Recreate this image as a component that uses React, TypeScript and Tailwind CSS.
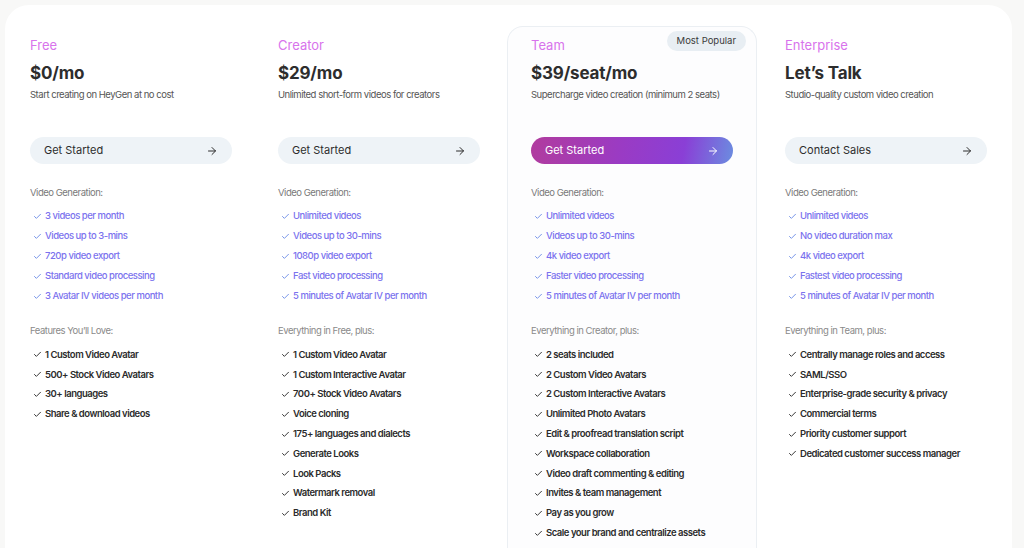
import { ArrowRight, Check } from 'lucide-react';

type Plan = {
    name: string;
    price: string;
    desc: string;
    cta: string;
    genLabel: string;
    gen: string[];
    featLabel: string;
    feats: string[];
    popular?: boolean;
    width: string;
};

const plans: Plan[] = [
    {
        name: 'Free',
        price: '$0/mo',
        desc: 'Start creating on HeyGen at no cost',
        cta: 'Get Started',
        genLabel: 'Video Generation:',
        gen: [
            '3 videos per month',
            'Videos up to 3-mins',
            '720p video export',
            'Standard video processing',
            '3 Avatar IV videos per month',
        ],
        featLabel: 'Features You’ll Love:',
        feats: ['1 Custom Video Avatar', '500+ Stock Video Avatars', '30+ languages', 'Share & download videos'],
        width: 'w-[248px]',
    },
    {
        name: 'Creator',
        price: '$29/mo',
        desc: 'Unlimited short-form videos for creators',
        cta: 'Get Started',
        genLabel: 'Video Generation:',
        gen: [
            'Unlimited videos',
            'Videos up to 30-mins',
            '1080p video export',
            'Fast video processing',
            '5 minutes of Avatar IV per month',
        ],
        featLabel: 'Everything in Free, plus:',
        feats: [
            '1 Custom Video Avatar',
            '1 Custom Interactive Avatar',
            '700+ Stock Video Avatars',
            'Voice cloning',
            '175+ languages and dialects',
            'Generate Looks',
            'Look Packs',
            'Watermark removal',
            'Brand Kit',
        ],
        width: 'w-[253px]',
    },
    {
        name: 'Team',
        price: '$39/seat/mo',
        desc: 'Supercharge video creation (minimum 2 seats)',
        cta: 'Get Started',
        genLabel: 'Video Generation:',
        gen: [
            'Unlimited videos',
            'Videos up to 30-mins',
            '4k video export',
            'Faster video processing',
            '5 minutes of Avatar IV per month',
        ],
        featLabel: 'Everything in Creator, plus:',
        feats: [
            '2 seats included',
            '2 Custom Video Avatars',
            '2 Custom Interactive Avatars',
            'Unlimited Photo Avatars',
            'Edit & proofread translation script',
            'Workspace collaboration',
            'Video draft commenting & editing',
            'Invites & team management',
            'Pay as you grow',
            'Scale your brand and centralize assets',
        ],
        popular: true,
        width: 'w-[250px]',
    },
    {
        name: 'Enterprise',
        price: 'Let’s Talk',
        desc: 'Studio-quality custom video creation',
        cta: 'Contact Sales',
        genLabel: 'Video Generation:',
        gen: [
            'Unlimited videos',
            'No video duration max',
            '4k video export',
            'Fastest video processing',
            '5 minutes of Avatar IV per month',
        ],
        featLabel: 'Everything in Team, plus:',
        feats: [
            'Centrally manage roles and access',
            'SAML/SSO',
            'Enterprise-grade security & privacy',
            'Commercial terms',
            'Priority customer support',
            'Dedicated customer success manager',
        ],
        width: 'ml-[4px] w-[250px]',
    },
];

function PlanColumn({ plan }: { plan: Plan }) {
    const card = plan.popular
        ? 'border border-b-0 border-[#ebeff3] bg-[#fdfdfe] rounded-t-[16px]'
        : 'border border-transparent';
    return (
        <div className={`relative shrink-0 px-[23px] pt-[10px] pb-10 tracking-[-0.03em] whitespace-nowrap ${plan.width} ${card}`}>
            {plan.popular && (
                <span className="absolute top-[4px] right-[10px] rounded-full bg-[#e8eef3] px-[10px] py-[4px] text-[9.5px] leading-[12px] tracking-normal text-[#3a3a3a]">
                    Most Popular
                </span>
            )}
            <div className="text-[13px] leading-[16px] tracking-normal text-[#d873ec]">{plan.name}</div>
            <div className="mt-[10px] text-[17px] leading-[20px] font-bold tracking-[-0.01em] text-[#2d2d2d]">
                {plan.price}
            </div>
            <div className="mt-[6px] text-[9.5px] leading-[12px] text-[#555]">{plan.desc}</div>
            {plan.popular ? (
                <button className="mt-[36px] flex h-[27px] w-[202px] items-center justify-between rounded-full bg-[linear-gradient(100deg,#b13c9e_0%,#9a3bc4_45%,#8a3fd6_75%,#6b8de0_100%)] px-[14px] text-[11px] tracking-normal text-white">
                    Get Started
                    <ArrowRight className="h-[12px] w-[12px]" strokeWidth={2} />
                </button>
            ) : (
                <button className="mt-[36px] flex h-[27px] w-[202px] items-center justify-between rounded-full bg-[#eef3f7] px-[14px] text-[11px] tracking-normal text-[#2d2d2d]">
                    {plan.cta}
                    <ArrowRight className="h-[12px] w-[12px]" strokeWidth={2} />
                </button>
            )}
            <div className="mt-[23px] text-[9.5px] leading-[12px] text-[#7a7a7a]">{plan.genLabel}</div>
            <ul className="mt-[7px]">
                {plan.gen.map((g) => (
                    <li key={g} className="flex h-[20px] items-center gap-[3px] pl-[3px] text-[9.5px] font-medium text-[#7b72ee]">
                        <Check className="h-[9px] w-[9px] text-[#6f8ee6]" strokeWidth={2.5} />
                        {g}
                    </li>
                ))}
            </ul>
            <div className="mt-[19px] text-[9.5px] leading-[12px] text-[#8a8a8a]">{plan.featLabel}</div>
            <ul className="mt-[8px]">
                {plan.feats.map((f) => (
                    <li key={f} className="flex h-[19.8px] items-center gap-[3px] pl-[3px] text-[9.5px] font-semibold text-[#2b2b2b]">
                        <Check className="h-[9px] w-[9px]" strokeWidth={2.5} />
                        {f}
                    </li>
                ))}
            </ul>
        </div>
    );
}

export default function App() {
    return (
        <div className="h-[548px] w-[1024px] overflow-hidden bg-[#f8f8f7] pt-[5px] pl-[5px] font-['Inter',sans-serif]">
            <div className="h-[600px] w-[1007px] rounded-[24px] bg-white pt-[21px] pl-[1px]">
                <div className="flex">
                    {plans.map((p) => (
                        <PlanColumn key={p.name} plan={p} />
                    ))}
                </div>
            </div>
        </div>
    );
}
